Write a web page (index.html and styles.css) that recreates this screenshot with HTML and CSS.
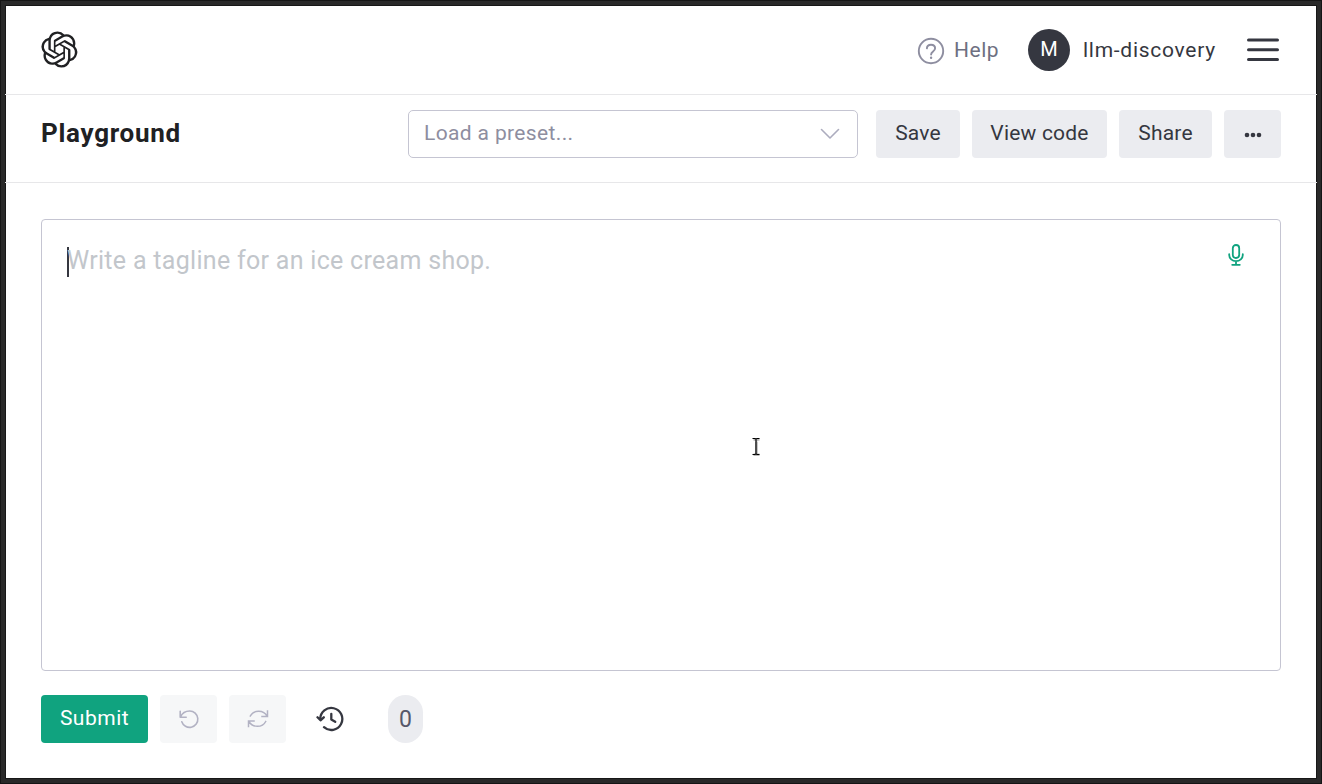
FILE: index.html
```
<!DOCTYPE html>
<html lang="en">
<head>
<meta charset="utf-8">
<title>Playground</title>
<link rel="stylesheet" href="styles.css">
</head>
<body>
<div class="window">
  <header class="topbar">
    <svg class="logo" viewBox="0 0 41 41" fill="currentColor"><path d="M37.532 16.87a9.963 9.963 0 0 0-.856-8.184 10.078 10.078 0 0 0-10.855-4.835A9.964 9.964 0 0 0 18.306.5a10.079 10.079 0 0 0-9.614 6.977 9.967 9.967 0 0 0-6.664 4.834 10.08 10.08 0 0 0 1.24 11.817 9.965 9.965 0 0 0 .856 8.185 10.079 10.079 0 0 0 10.855 4.835 9.965 9.965 0 0 0 7.516 3.35 10.078 10.078 0 0 0 9.617-6.981 9.967 9.967 0 0 0 6.663-4.834 10.079 10.079 0 0 0-1.243-11.813ZM22.498 37.886a7.474 7.474 0 0 1-4.799-1.735c.061-.033.168-.091.237-.134l7.964-4.6a1.294 1.294 0 0 0 .655-1.134V19.054l3.366 1.944a.12.12 0 0 1 .066.092v9.299a7.505 7.505 0 0 1-7.49 7.496ZM6.392 31.006a7.471 7.471 0 0 1-.894-5.023c.06.036.162.099.237.141l7.964 4.6a1.297 1.297 0 0 0 1.308 0l9.724-5.614v3.888a.12.12 0 0 1-.048.103l-8.051 4.649a7.504 7.504 0 0 1-10.24-2.744ZM4.297 13.62A7.469 7.469 0 0 1 8.2 10.333c0 .068-.004.19-.004.274v9.201a1.294 1.294 0 0 0 .654 1.132l9.723 5.614-3.366 1.944a.12.12 0 0 1-.114.01L7.04 23.856a7.504 7.504 0 0 1-2.743-10.237Zm27.658 6.437-9.724-5.615 3.367-1.943a.121.121 0 0 1 .113-.01l8.052 4.648a7.498 7.498 0 0 1-1.158 13.528v-9.476a1.293 1.293 0 0 0-.65-1.132Zm3.35-5.043c-.059-.037-.162-.099-.236-.141l-7.965-4.6a1.298 1.298 0 0 0-1.308 0l-9.723 5.614v-3.888a.12.12 0 0 1 .048-.103l8.05-4.645a7.497 7.497 0 0 1 11.135 7.763Zm-21.063 6.929-3.367-1.944a.12.12 0 0 1-.065-.092v-9.299a7.497 7.497 0 0 1 12.293-5.756 6.94 6.94 0 0 0-.236.134l-7.965 4.6a1.294 1.294 0 0 0-.654 1.132l-.006 11.225Zm1.829-3.943 4.33-2.501 4.332 2.5v5l-4.331 2.5-4.331-2.5V18Z"/></svg>
    <a class="help">
      <svg class="help-icon" viewBox="0 0 28 28" fill="none" stroke="currentColor" stroke-width="1.9" stroke-linecap="round"><circle cx="14" cy="14" r="12.2"/><path d="M9.9 11.4C10 8.9 11.8 7.7 14 7.7c2.4 0 4.1 1.5 4.1 3.6 0 3.2-4 3.1-4 6.2"/><circle cx="14.1" cy="20.7" r=".6" fill="currentColor" stroke-width="1.2"/></svg>
      <span class="help-text">Help</span>
    </a>
    <span class="avatar">M</span>
    <span class="org">llm-discovery</span>
    <svg class="menu" viewBox="0 0 32 24" stroke="currentColor" stroke-width="3" stroke-linecap="round"><path d="M1.5 2h29M1.5 11.7h29M1.5 21.4h29"/></svg>
  </header>
  <section class="toolbar">
    <h1 class="title">Playground</h1>
    <div class="preset">
      <span class="preset-text">Load a preset...</span>
      <svg class="chevron" viewBox="0 0 20 12" fill="none" stroke="currentColor" stroke-width="1.6" stroke-linecap="round" stroke-linejoin="round"><path d="M1.5 1.5 10 10l8.500-8.500"/></svg>
    </div>
    <div class="actions">
      <button class="btn save">Save</button>
      <button class="btn code">View code</button>
      <button class="btn share">Share</button>
      <button class="btn more" aria-label="More"><svg class="dots" viewBox="0 0 18 6" fill="currentColor"><circle cx="3" cy="3" r="2.300"/><circle cx="9" cy="3" r="2.300"/><circle cx="15" cy="3" r="2.300"/></svg></button>
    </div>
  </section>
  <main class="content">
    <div class="prompt">
      <span class="caret"></span>
      <span class="placeholder">Write a tagline for an ice cream shop.</span>
      <svg class="mic" viewBox="0 0 16 22" fill="none" stroke="currentColor" stroke-width="1.8" stroke-linecap="round"><rect x="4.800" y="1" width="6.400" height="13" rx="3.200"/><path d="M1.200 10.200v.8a6.800 6.200 0 0 0 13.600 0v-.8M8 17.200v3.500M4.200 20.800h7.600"/></svg>
      <svg class="pointer" viewBox="0 0 10 20" fill="none"><path d="M2.500 2.500h2l1 1 1-1h2M5.500 3v14M2.500 17.800h2l1-1 1 1h2" stroke="#bbb" stroke-width="2.600"/><path d="M1.500 1.500H4l1 .8 1-.8h2.500M5 2v15M1.500 17.500H4l1-.8 1 .8h2.500" stroke="#000" stroke-width="1.200"/></svg>
    </div>
    <div class="footer">
      <button class="btn submit">Submit</button>
      <button class="btn muted" aria-label="Undo"><svg class="undo" viewBox="0 0 20 20" fill="none" stroke="currentColor" stroke-width="1.600" stroke-linecap="round" stroke-linejoin="round"><path d="M1.200 2.200v6h6M1.500 8C3 4.500 6.500 2 10.700 2a8.200 8.200 0 1 1-7.900 10.700"/></svg></button>
      <button class="btn muted" aria-label="Regenerate"><svg class="redo" viewBox="0 0 22 20" fill="none" stroke="currentColor" stroke-width="1.500" stroke-linecap="square"><path d="M20.500 2v5.500H15M20 7.200A9.200 8.500 0 0 0 3.300 7M1.500 17.500V12H7M2 12.300A9.200 8.500 0 0 0 18.700 12.500"/></svg></button>
      <svg class="history" viewBox="0 0 28 26" fill="none" stroke="currentColor" stroke-width="2.300" stroke-linecap="round" stroke-linejoin="round"><path d="M4.300 13.200A11 11 0 1 1 8 21.200M1.500 11.300l3 3 3.300-3M15.300 7.800v5.600l3.900 2.400"/></svg>
      <span class="count">0</span>
    </div>
  </main>
</div>
</body>
</html>
```
FILE: styles.css
```
* { box-sizing: border-box; }
body { margin: 0; font-family: Roboto, "Liberation Sans", sans-serif; font-size: 21px; color: #353740; }
svg { display: block; flex: none; }
.window { width: 1322px; height: 784px; border: 5px solid #292929; box-shadow: inset 0 0 0 1px #171717; background: #fff; outline: 1px solid #151515; outline-offset: -1px; overflow: hidden; }
.topbar { height: 90px; padding: 0 38px 0 36px; display: flex; align-items: center; border-bottom: 1px solid #e7e7e9; }
.logo { width: 37px; height: 37px; color: #202123; margin-right: auto; }
.help { display: flex; align-items: center; color: #6e7081; }
.help-icon { width: 28px; height: 28px; margin: 2px 9px 0 0; color: #8e8ea0; }
.help-text { width: 45px; white-space: nowrap; letter-spacing: .55px; }
.avatar { width: 42px; height: 42px; border-radius: 50%; margin: 0 13px 0 29px; background: #353740; color: #fff; text-align: center; font-size: 20px; line-height: 41px; }
.org { width: 133px; white-space: nowrap; letter-spacing: .72px; }
.menu { width: 32px; height: 24px; margin-left: 31px; }
.toolbar { height: 88px; padding: 15px 36px 0; display: flex; align-items: flex-start; border-bottom: 1px solid #e7e7e9; }
.title { width: 367px; margin: 0; font-size: 26px; line-height: 46px; font-weight: 700; letter-spacing: .72px; color: #202123; }
.preset { width: 450px; height: 48px; padding: 0 17px 2px 15px; display: flex; align-items: center; justify-content: space-between; border: 1px solid #c5c5d2; border-radius: 5px; color: #8e8ea0; }
.preset-text { letter-spacing: .36px; }
.chevron { width: 20px; height: 12px; margin-top: 2px; color: #acacbe; }
.actions { display: flex; gap: 12px; margin-left: 18px; }
.btn { height: 48px; padding: 0 0 2px; display: flex; align-items: center; justify-content: center; border: 0; border-radius: 4px; background: #ebecf0; color: #353740; font: inherit; letter-spacing: .2px; white-space: nowrap; }
.save { width: 84px; }
.code { width: 135px; }
.share { width: 93px; }
.more { width: 57px; padding: 0; }
.dots { width: 18px; height: 6px; margin-top: 1px; }
.content { padding: 36px; }
.prompt { position: relative; height: 452px; padding: 27px 44px 0 25px; display: flex; align-items: flex-start; border: 1px solid #c5c5d2; border-radius: 4px; }
.caret { width: 2px; height: 30px; background: #353740; }
.placeholder { margin-left: -2px; font-size: 25px; line-height: 28px; letter-spacing: .3px; color: #c2c6cb; }
.mic { position: absolute; left: 1186px; top: 24px; width: 16px; height: 22px; color: #10a37f; }
.pointer { position: absolute; left: 709px; top: 217px; width: 10px; height: 20px; }
.footer { display: flex; align-items: center; margin-top: 24px; }
.submit { width: 107px; background: #10a37f; color: #fff; letter-spacing: .5px; }
.muted { width: 57px; margin-left: 12px; padding: 0; background: #f6f7f8; color: #b2b2c3; }
.undo { width: 20px; height: 20px; }
.redo { width: 22px; height: 20px; }
.history { width: 28px; height: 26px; margin-left: 30px; }
.count { width: 35px; height: 48px; margin-left: 44px; border-radius: 18px; background: #ebecf0; color: #565869; text-align: center; font-size: 23px; line-height: 49px; }
```
